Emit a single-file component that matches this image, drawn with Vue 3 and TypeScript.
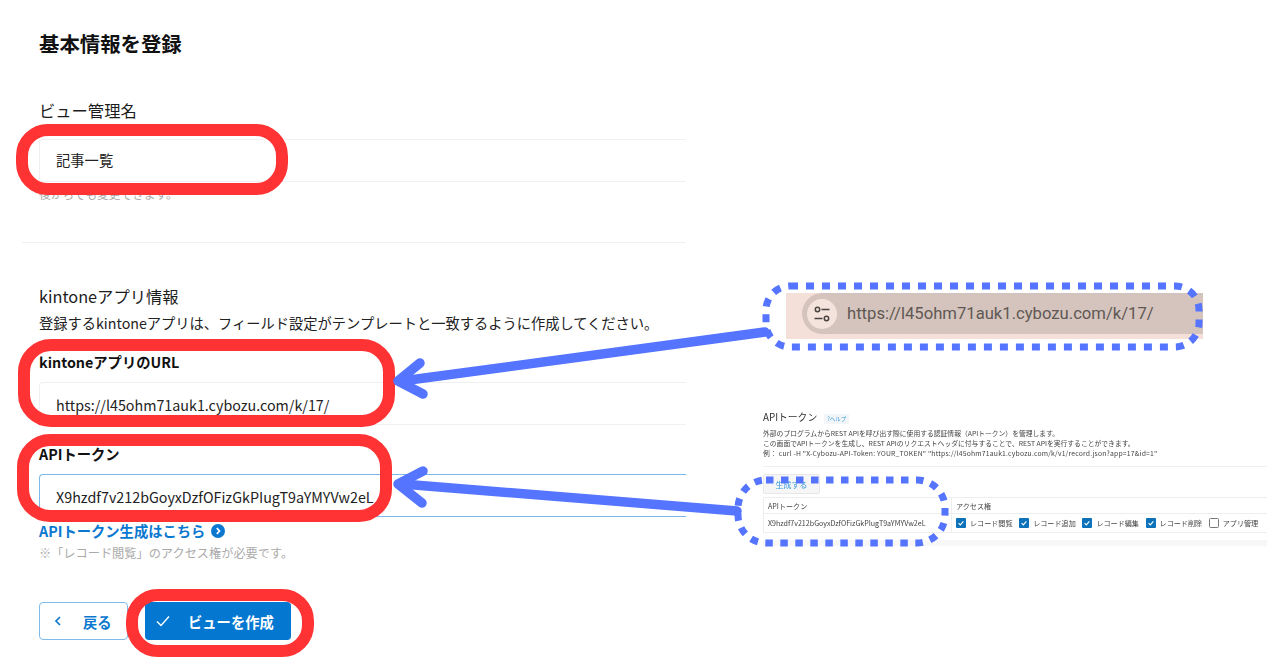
<script setup lang="ts">
interface Perm { label: string; on: boolean }
const perms: Perm[] = [
  { label: 'レコード閲覧', on: true },
  { label: 'レコード追加', on: true },
  { label: 'レコード編集', on: true },
  { label: 'レコード削除', on: true },
  { label: 'アプリ管理', on: false },
]
const token = 'X9hzdf7v212bGoyxDzfOFizGkPIugT9aYMYVw2eL'
const url = 'https://l45ohm71auk1.cybozu.com/k/17/'
</script>

<template>
  <div class="page">
    <main class="form">
      <div class="pad">
        <h1 class="title">基本情報を登録</h1>
        <div class="label first">ビュー管理名</div>
        <div class="input first-input">記事一覧</div>
        <p class="help">後からでも変更できます。</p>
      </div>
      <hr class="divider" />
      <div class="pad">
        <div class="label second">kintoneアプリ情報</div>
        <p class="desc">登録するkintoneアプリは、フィールド設定がテンプレートと一致するように作成してください。</p>
        <div class="strong url-label">kintoneアプリのURL</div>
        <div class="input url-input">{{ url }}</div>
        <div class="strong token-label">APIトークン</div>
        <div class="input focus">{{ token }}</div>
        <a class="link">
          APIトークン生成はこちら
          <svg class="link-icon" width="14" height="14" viewBox="0 0 14 14">
            <circle cx="7" cy="7" r="7" fill="#0b78d0" />
            <path d="M5.8 4.2 8.5 7 5.8 9.8" fill="none" stroke="#fff" stroke-width="1.7" />
          </svg>
        </a>
        <p class="note">※「レコード閲覧」のアクセス権が必要です。</p>
        <div class="buttons">
          <button class="btn back">
            <svg width="8" height="12" viewBox="0 0 8 12"><path d="M6 2 2 6l4 4" fill="none" stroke="#0b78d0" stroke-width="1.7" /></svg>
            <span>戻る</span>
          </button>
          <button class="btn create">
            <svg width="14" height="12" viewBox="0 0 14 12"><path d="M1 6.5 5 10.5 13 1.5" fill="none" stroke="#fff" stroke-width="1.4" /></svg>
            <span>ビューを作成</span>
          </button>
        </div>
      </div>
    </main>

    <aside class="aside">
      <div class="urlbar">
        <div class="omnibox">
          <span class="tune">
            <svg width="18" height="18" viewBox="0 0 18 18" fill="none" stroke="#4a4340" stroke-width="1.5">
              <circle cx="4.5" cy="4.5" r="2.2" />
              <path d="M8.5 4.5H16.5M1.5 13.5H9.5" />
              <circle cx="13.5" cy="13.5" r="2.2" />
            </svg>
          </span>
          <span class="urltext">{{ url }}</span>
        </div>
      </div>

      <section class="shot">
        <div class="shot-title">APIトークン<span class="badge">?ヘルプ</span></div>
        <div class="shot-text">
          <div>外部のプログラムからREST APIを呼び出す際に使用する認証情報（APIトークン）を管理します。</div>
          <div>この画面でAPIトークンを生成し、REST APIのリクエストヘッダに付与することで、REST APIを実行することができます。</div>
          <div class="curl">例： curl -H "X-Cybozu-API-Token: YOUR_TOKEN" "https://l45ohm71auk1.cybozu.com/k/v1/record.json?app=17&amp;id=1"</div>
        </div>
        <div class="shot-rule"></div>
        <div class="shot-btn">生成する</div>
        <div class="table">
          <div class="cell head c1">APIトークン</div>
          <div class="cell head c2">アクセス権</div>
          <div class="cell c1 tok">{{ token }}</div>
          <div class="cell c2 perms">
            <span v-for="p in perms" :key="p.label" class="perm">
              <svg width="10" height="10" viewBox="0 0 10 10">
                <rect v-if="p.on" width="10" height="10" rx="1" fill="#0d72b9" />
                <path v-if="p.on" d="M2.6 5.2 4.3 6.9 7.4 3.4" fill="none" stroke="#fff" stroke-width="1.1" />
                <rect v-else x=".5" y=".5" width="9" height="9" rx="1" fill="#fff" stroke="#777" />
              </svg>
              {{ p.label }}
            </span>
          </div>
        </div>
        <div class="band"></div>
      </section>
    </aside>

    <svg class="overlay" width="1280" height="670" viewBox="0 0 1280 670" fill="none">
      <g stroke="#ff3333" stroke-width="12">
        <rect x="22" y="130" width="260" height="59" rx="26" />
        <rect x="24" y="345" width="365" height="76" rx="27" />
        <rect x="23" y="440" width="363" height="76" rx="27" />
        <rect x="132" y="595" width="176" height="56" rx="26" />
      </g>
      <g stroke="#5574ff" stroke-width="9.5" stroke-linecap="round" stroke-linejoin="round">
        <path d="M765 332 402 381" />
        <path d="M420 363 398 381 423 394" />
        <path d="M737 511 402 484" />
        <path d="M423 471 398 484 422 503" />
      </g>
      <g stroke="#5574ff" stroke-width="7">
        <rect x="766" y="286" width="433" height="61" rx="24" stroke-dasharray="8 8" />
        <rect x="738" y="480" width="207" height="63" rx="28" stroke-dasharray="7.5 7.5" />
      </g>
    </svg>
  </div>
</template>

<style>
html, body { margin: 0; background: #fff; }
</style>

<style scoped>
.page {
  position: relative;
  display: flex;
  width: 1280px;
  height: 670px;
  overflow: hidden;
  background: #fff;
  color: #1c1c1c;
  font-family: "Noto Sans CJK JP", "Noto Sans", sans-serif;
}
.form { width: 664px; margin-left: 22px; flex: none; overflow: hidden; padding-top: 28px; box-sizing: border-box; }
.pad { padding-left: 17px; }
.title { margin: 0; height: 30px; font-size: 20.4px; line-height: 30px; font-weight: 700; color: #111; }
.label { height: 26px; font-size: 16.3px; line-height: 26px; }
.label.first { margin-top: 39px; }
.label.second { margin-top: 40px; }
.input {
  box-sizing: border-box;
  height: 43px;
  padding: 2px 0 0 16px;
  border: 1px solid #f0f0f2;
  border-right: 0;
  border-radius: 4px 0 0 4px;
  font-size: 14.3px;
  line-height: 39px;
  color: #222;
  white-space: nowrap;
}
.first-input { margin-top: 16px; padding-top: 0; }
.help { margin: 3px 0 0; height: 17px; font-size: 11.7px; line-height: 17px; color: #aaa; }
.divider { margin: 40px 0 0; height: 1px; border: 0; background: #f0f0f0; }
.desc { margin: 4px 0 0; height: 20px; font-size: 14.25px; line-height: 20px; color: #222; white-space: nowrap; }
.strong { height: 20px; font-size: 14.3px; line-height: 20px; font-weight: 700; color: #111; }
.url-label { margin-top: 19px; }
.url-input { margin-top: 10px; }
.token-label { margin-top: 19px; }
.focus { margin-top: 10px; border-color: #7ab8ec; }
.link { display: flex; align-items: center; gap: 6px; margin-top: 4px; height: 20px; font-size: 14.3px; line-height: 20px; font-weight: 700; color: #0b78d0; }
.link-icon { flex: none; }
.note { margin: 3px 0 0; height: 18px; font-size: 12.2px; line-height: 18px; color: #aaa; }
.buttons { display: flex; gap: 17px; margin-top: 40px; }
.btn {
  display: flex;
  align-items: center;
  box-sizing: border-box;
  height: 38px;
  padding: 0;
  font-family: inherit;
  font-size: 14.3px;
  font-weight: 700;
  border-radius: 4px;
}
.back { width: 89px; padding-left: 14px; gap: 21px; background: #fff; border: 1px solid #7fbbea; color: #0b78d0; }
.create { width: 146px; padding-left: 11px; gap: 18px; background: #0477d1; border: 0; color: #fff; }
.aside { width: 594px; flex: none; padding-top: 293px; box-sizing: border-box; }
.urlbar { margin-left: 100px; width: 417px; height: 46px; background: #f5e0d9; }
.omnibox {
  display: flex;
  align-items: center;
  gap: 10px;
  box-sizing: border-box;
  margin-left: 16px;
  height: 41px;
  padding-left: 5px;
  background: #d5c4bd;
  border-radius: 21px 0 0 21px;
}
.tune {
  display: flex;
  align-items: center;
  justify-content: center;
  width: 30px;
  height: 30px;
  border-radius: 50%;
  background: #f3e3dc;
  flex: none;
}
.urltext { font-family: Roboto, sans-serif; font-size: 16.65px; color: #5f5854; white-space: nowrap; }
.shot { margin: 69px 0 0 77px; width: 504px; filter: blur(0.35px); color: #444; }
.shot-title { height: 18px; font-size: 9.8px; line-height: 18px; color: #333; white-space: nowrap; }
.badge { margin-left: 7px; padding: 1px 3px; font-size: 5.5px; color: #3498db; background: #f3f6f8; }
.shot-text { margin-top: 2px; font-size: 6.8px; line-height: 10px; white-space: nowrap; }
.curl { letter-spacing: 0.2px; }
.shot-rule { margin-top: 8px; height: 1px; background: #eee; }
.shot-btn {
  box-sizing: border-box;
  margin-top: 7px;
  width: 57px;
  height: 20px;
  font-size: 8px;
  line-height: 20px;
  text-align: center;
  color: #3498db;
  background: #f6f6f6;
  border: 1px solid #e8e8e8;
  border-radius: 2px;
}
.table {
  display: grid;
  grid-template-columns: 189px 315px;
  grid-template-rows: 16px 18px;
  margin-top: 3px;
  border-top: 1px solid #eee;
  border-bottom: 1px solid #eee;
  font-size: 7.1px;
}
.cell { display: flex; align-items: center; padding-left: 4px; white-space: nowrap; }
.head { border-bottom: 1px solid #eee; }
.c1 { border-left: 1px solid #eee; border-right: 1px solid #eee; }
.perm { display: flex; align-items: center; gap: 4px; width: 63.2px; flex: none; }
.tok { color: #444; }
.band { margin-top: 7px; height: 6px; background: #f7f7f7; }
.overlay { position: absolute; left: 0; top: 0; pointer-events: none; }
</style>
